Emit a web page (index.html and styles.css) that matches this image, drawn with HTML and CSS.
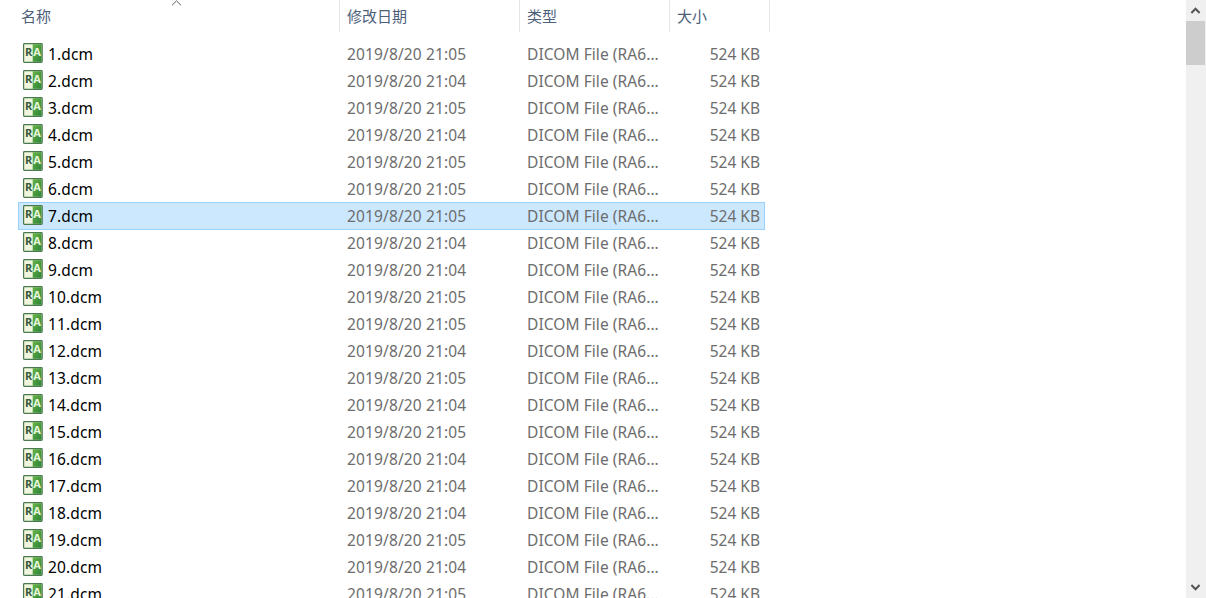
FILE: index.html
```html
<!DOCTYPE html>
<html lang="zh-CN">
<head>
<meta charset="utf-8">
<title>DICOM</title>
<link rel="stylesheet" href="styles.css">
</head>
<body>
<main class="explorer">
  <section class="list">
    <header class="head">
      <div class="th th-name">名称
        <svg class="sort" width="11" height="6" viewBox="0 0 11 6"><path d="M1 5.3 5.5 .9 10 5.3" fill="none" stroke="#5c5c5c"/></svg>
      </div>
      <div class="th">修改日期</div>
      <div class="th">类型</div>
      <div class="th">大小</div>
    </header>
    <div class="rows" id="rows"></div>
  </section>
  <aside class="scrollbar">
    <svg class="arrow" width="20" height="21" viewBox="0 0 20 21"><path d="M5.4 13 9.5 8.8 13.6 13" fill="none" stroke="#555" stroke-width="2"/></svg>
    <div class="thumb"></div>
    <svg class="arrow arrow-down" width="20" height="21" viewBox="0 0 20 21"><path d="M5.4 8 9.5 12.2 13.6 8" fill="none" stroke="#555" stroke-width="2"/></svg>
  </aside>
</main>
<template id="row">
  <div class="row">
    <svg class="icon" width="20" height="20" viewBox="0 0 20 20">
      <defs>
        <linearGradient id="leaf" x1="0" y1="0" x2="1" y2="1"><stop offset="0" stop-color="#68b246"/><stop offset="1" stop-color="#2d8438"/></linearGradient>
      </defs>
      <rect x=".6" y=".6" width="18.6" height="18.8" rx=".8" fill="#eff6dd" stroke="#4b7950" stroke-width="1.2"/>
      <rect x="9.7" y="1.2" width="8.9" height="17.6" fill="url(#leaf)"/>
      <text class="mark" x="2" y="13.2" fill="#36593c">R</text>
      <text class="mark" x="10.2" y="13.2" fill="#e9f6da">A</text>
    </svg>
    <span class="name"></span>
    <span class="date"></span>
    <span class="type">DICOM File (RA6...</span>
    <span class="size">524 KB</span>
  </div>
</template>
<script src="rows.js"></script>
</body>
</html>
```
FILE: styles.css
```css
* { box-sizing: border-box; }
body { margin: 0; background: #fff; font: 15.5px/20px "Noto Sans", "Noto Sans CJK SC", sans-serif; }
.explorer { display: flex; justify-content: space-between; height: 598px; overflow: hidden; }
.list { width: 770px; }
.head { display: grid; grid-template-columns: 340px 180px 150px 100px; height: 40px; }
.th { position: relative; height: 32px; padding: 6px 0 0 7px; border-right: 1px solid #e5e5e5; color: #4c607a; font: 15px/20px "Noto Sans CJK SC", sans-serif; }
.th-name { padding-left: 21px; }
.sort { position: absolute; left: 171px; top: 0; }
.rows { padding-left: 18px; }
.row { display: grid; grid-template-columns: 25px 298px 180px 150px 84px; width: 747px; height: 27px; align-items: center; padding: 0 0 0 5px; color: #6d6d6d; letter-spacing: .13px; white-space: nowrap; }
.row.selected { height: 28px; margin-bottom: -1px; padding-bottom: 1px; background: #cce8ff; box-shadow: inset 0 0 0 1px #99d1ff; }
.icon { display: block; align-self: start; margin-top: 3px; letter-spacing: 0; }
.mark { font: bold 11px "Open Sans", sans-serif; }
.name { color: #000; }
.date { padding-left: 1px; }
.type { padding-left: 1px; letter-spacing: .07px; }
.size { text-align: right; letter-spacing: 0; }
.scrollbar { display: flex; flex-direction: column; width: 20px; background: #f0f0f0; }
.arrow { display: block; flex: none; }
.thumb { width: 19px; height: 44px; background: #cdcdcd; }
.arrow-down { margin-top: auto; }
```
FILE: rows.js
```js
const minutes = "545455544554545444545";
const template = document.getElementById("row");
const rows = document.getElementById("rows");
[...minutes].forEach((minute, i) => {
  const row = template.content.cloneNode(true);
  row.querySelector(".name").textContent = `${i + 1}.dcm`;
  row.querySelector(".date").textContent = `2019/8/20 21:0${minute}`;
  if (i === 6) row.querySelector(".row").classList.add("selected");
  rows.appendChild(row);
});
```
